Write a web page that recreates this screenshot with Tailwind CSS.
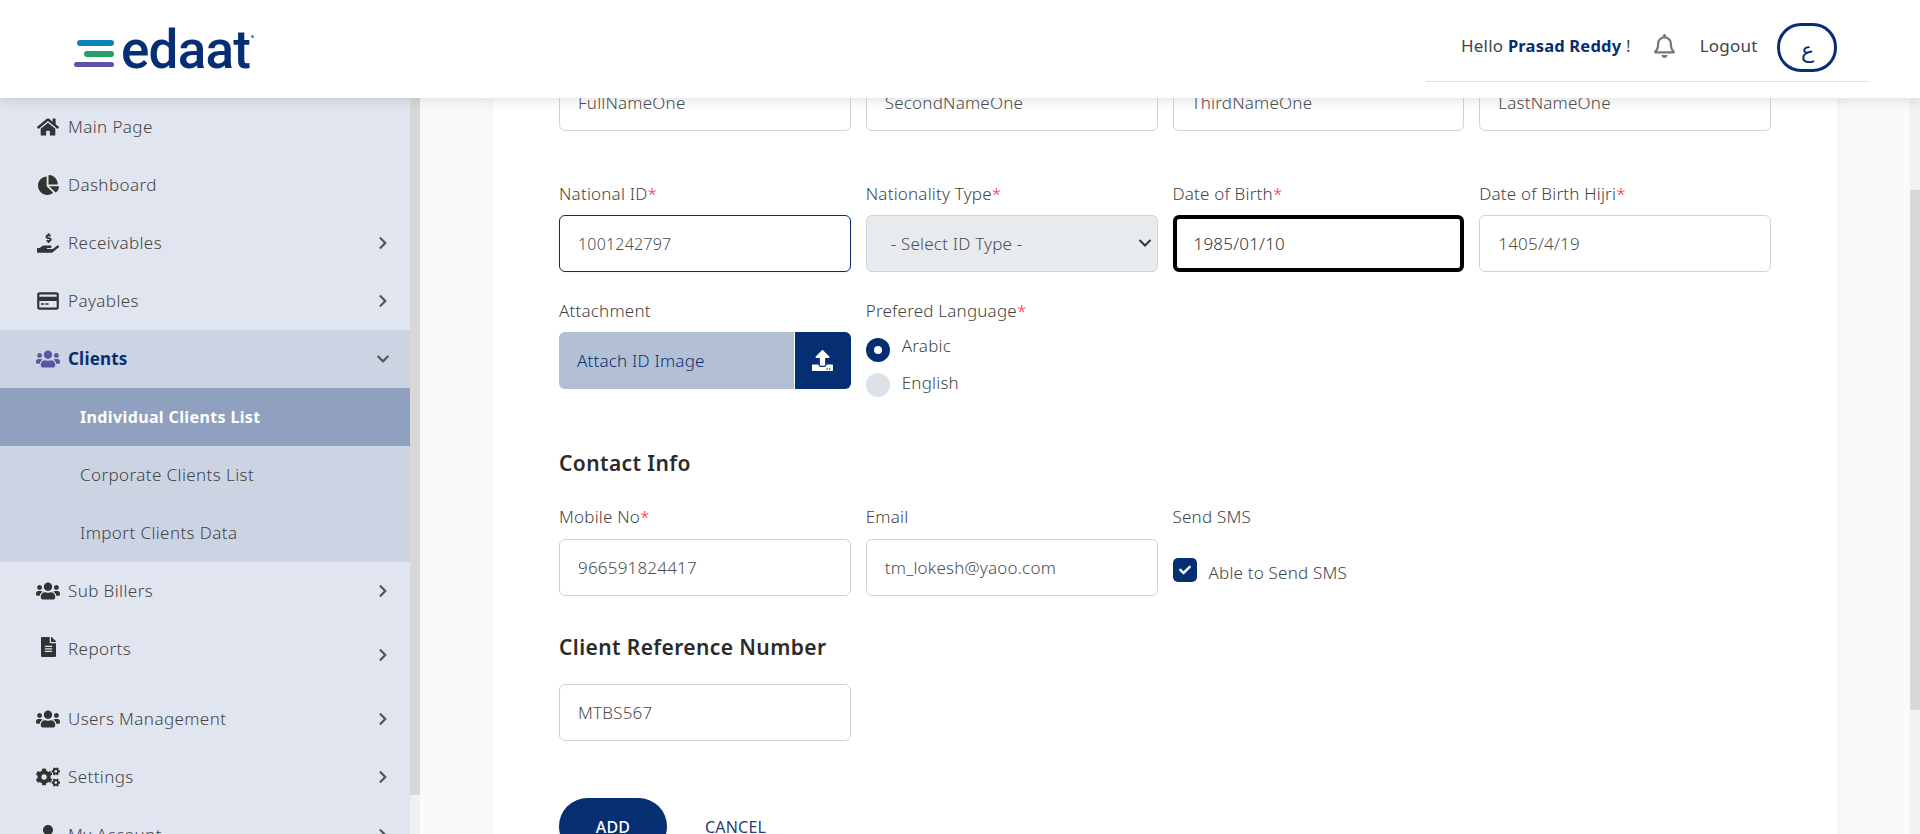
<!DOCTYPE html>
<html lang="en">
<head>
  <meta charset="UTF-8">
  <meta name="viewport" content="width=device-width, initial-scale=1.0">
  <title>edaat | Add Client</title>
  <script src="https://cdn.jsdelivr.net/npm/@tailwindcss/browser@4"></script>
</head>
<body class="font-['Noto_Sans',sans-serif] text-[#444] text-[17px] tracking-[0.2px]">

<svg class="hidden">
  <symbol id="chev" viewBox="0 0 320 512"><path d="M285.476 272.971L91.132 467.314c-9.373 9.373-24.569 9.373-33.941 0l-22.667-22.667c-9.357-9.357-9.375-24.522-.04-33.901L188.505 256 34.484 101.255c-9.335-9.379-9.317-24.544.04-33.901l22.667-22.667c9.373-9.373 24.569-9.373 33.941 0L285.475 239.03c9.373 9.372 9.373 24.568.001 33.941z"/></symbol>
  <symbol id="users" viewBox="0 0 640 512"><path d="M96 224c35.3 0 64-28.7 64-64s-28.7-64-64-64-64 28.7-64 64 28.7 64 64 64zm448 0c35.3 0 64-28.7 64-64s-28.7-64-64-64-64 28.7-64 64 28.7 64 64 64zm32 32h-64c-17.6 0-33.5 7.1-45.1 18.6 40.3 22.1 68.9 62 75.1 109.4h66c17.7 0 32-14.3 32-32v-32c0-35.3-28.7-64-64-64zm-256 0c61.9 0 112-50.1 112-112S381.9 32 320 32 208 82.1 208 144s50.1 112 112 112zm76.8 32h-8.3c-20.8 10-43.9 16-68.5 16s-47.6-6-68.5-16h-8.3C179.6 288 128 339.6 128 403.2V432c0 26.5 21.5 48 48 48h288c26.5 0 48-21.5 48-48v-28.8c0-63.6-51.6-115.2-115.2-115.2zm-223.7-13.4C161.5 263.1 145.6 256 128 256H64c-35.3 0-64 28.7-64 64v32c0 17.7 14.3 32 32 32h65.9c6.3-47.4 34.9-87.3 75.2-109.4z"/></symbol>
</svg>

<div class="h-screen overflow-hidden flex flex-col">

  <!-- Header -->
  <header class="relative z-10 h-[98px] shrink-0 bg-white shadow-[0_2px_12px_rgba(0,0,0,0.12)] flex items-start justify-between pl-[74px] pr-[51px]">
    <div class="flex items-center gap-[7px] h-[98px]">
      <div class="flex flex-col items-end gap-[5px] w-[40px] mt-[8px]">
        <span class="block w-[37px] h-[6px] rounded-full bg-[#0a82bd]"></span>
        <span class="block w-[30px] h-[6px] rounded-full bg-[#259e67]"></span>
        <span class="block w-[40px] h-[5px] rounded-full bg-[#5b55a3]"></span>
      </div>
      <div class="flex items-start mt-[1px]">
        <span class="font-['Roboto',sans-serif] font-medium text-[53px] leading-[60px] tracking-[-0.8px] text-[#062e72]">edaat</span>
        <span class="block w-[3px] h-[3px] mt-[15px] ml-[1px] rounded-full bg-[#5b7aa8]"></span>
      </div>
    </div>
    <div class="w-[443px] h-[82px] pt-[14px] pl-[35px] border-b border-[#dee2e6] flex items-center">
      <span class="pb-[3px]">Hello <b class="font-bold text-[16.5px] text-[#062e72]">Prasad Reddy</b> !</span>
      <svg class="w-[21px] h-[24px] ml-[23px] mb-[3px] fill-[#777]" viewBox="0 0 448 512"><path d="M439.39 362.29c-19.32-20.76-55.47-51.99-55.47-154.29 0-77.7-54.48-139.9-127.94-155.16V32c0-17.67-14.32-32-31.98-32s-31.98 14.33-31.98 32v20.84C118.56 68.1 64.08 130.3 64.08 208c0 102.3-36.15 133.53-55.47 154.29-6 6.45-8.66 14.16-8.61 21.71.11 16.4 12.98 32 32.1 32h383.8c19.12 0 32-15.6 32.1-32 .05-7.55-2.61-15.27-8.61-21.71zM67.53 368c21.22-27.97 44.42-74.33 44.53-159.42 0-.2-.06-.38-.06-.58 0-61.86 50.14-112 112-112s112 50.14 112 112c0 .2-.06.38-.06.58.11 85.1 23.31 131.46 44.53 159.42H67.53zM224 512c35.32 0 63.97-28.65 63.97-64H160.03c0 35.35 28.65 64 63.97 64z"/></svg>
      <span class="ml-[25px] pb-[3px]">Logout</span>
      <span class="ml-[20px] w-[60px] h-[49px] shrink-0 rounded-[24px] border-[3px] border-[#062e72] text-[#062e72] flex items-center justify-center font-['DejaVu_Sans',sans-serif] text-[22px] pt-[5px]">ع</span>
    </div>
  </header>

  <div class="flex-1 min-h-0 flex">

    <!-- Sidebar -->
    <nav class="w-[410px] shrink-0 bg-[#e1e5ef] overflow-hidden font-light tracking-[0.4px]">
      <a class="h-[58px] pl-[36px] pr-[20px] flex items-center">
        <span class="w-[24px] flex justify-center"><svg class="w-[22px] h-[20px] fill-[#333]" viewBox="0 0 576 512"><path d="M280.37 148.26L96 300.11V464a16 16 0 0 0 16 16l112.06-.29a16 16 0 0 0 15.92-16V368a16 16 0 0 1 16-16h64a16 16 0 0 1 16 16v95.64a16 16 0 0 0 16 16.05L464 480a16 16 0 0 0 16-16V300L295.67 148.26a12.19 12.19 0 0 0-15.3 0zM571.6 251.47L488 182.56V44.05a12 12 0 0 0-12-12h-56a12 12 0 0 0-12 12v72.61L318.47 43a48 48 0 0 0-61 0L4.34 251.47a12 12 0 0 0-1.6 16.9l25.5 31A12 12 0 0 0 45.15 301l235.22-193.74a12.19 12.19 0 0 1 15.3 0L530.9 301a12 12 0 0 0 16.9-1.6l25.5-31a12 12 0 0 0-1.7-16.93z"/></svg></span>
        <span class="ml-[8px]">Main Page</span>
      </a>
      <a class="h-[58px] pl-[36px] pr-[20px] flex items-center">
        <span class="w-[24px] flex justify-center"><svg class="w-[21px] h-[20px] fill-[#333]" viewBox="0 0 544 512"><path d="M527.79 288H290.5l158.03 158.03c6.04 6.04 15.98 6.53 22.19.68 38.7-36.46 65.32-85.61 73.13-140.86 1.34-9.46-6.51-17.85-16.06-17.85zm-15.83-64.8C503.72 103.74 408.26 8.28 288.8.04 279.68-.59 272 7.1 272 16.24V240h223.77c9.14 0 16.82-7.68 16.19-16.8zM224 288V50.71c0-9.55-8.39-17.4-17.84-16.06C86.99 51.49-4.1 155.6.14 280.37 4.5 408.51 114.83 513.59 243.03 511.98c50.4-.63 96.97-16.87 135.26-44.03 7.9-5.6 8.42-17.23 1.57-24.08L224 288z"/></svg></span>
        <span class="ml-[8px]">Dashboard</span>
      </a>
      <a class="h-[58px] pl-[36px] pr-[20px] flex items-center">
        <span class="w-[24px] flex justify-center"><svg class="w-[22px] h-[20px] fill-[#333]" viewBox="0 0 576 512"><path d="M271.06,144.3l54.27,14.3a8.59,8.59,0,0,1,6.63,8.1c0,4.6-4.09,8.4-9.12,8.4h-35.6a30,30,0,0,1-11.19-2.2c-5.24-2.2-11.28-1.7-15.3,2l-19,17.5a11.68,11.68,0,0,0-2.25,2.66,11.42,11.42,0,0,0,3.88,15.74,83.77,83.77,0,0,0,34.51,11.5V240c0,8.8,7.83,16,17.37,16h17.37c9.55,0,17.38-7.2,17.38-16V222.4c32.93-3.6,57.84-31,53.5-63-3.15-23-22.46-41.3-46.56-47.7L282.68,97.4a8.59,8.59,0,0,1-6.63-8.1c0-4.6,4.09-8.4,9.12-8.4h35.6A30,30,0,0,1,332,83.1c5.23,2.2,11.28,1.7,15.3-2l19-17.5A11.31,11.31,0,0,0,368.47,61a11.42,11.42,0,0,0-3.84-15.78,83.82,83.82,0,0,0-34.52-11.5V16c0-8.8-7.82-16-17.37-16H295.37C285.82,0,278,7.2,278,16V33.6c-32.89,3.6-57.85,31-53.51,63C227.63,119.6,247,137.9,271.06,144.3ZM565.27,328.1c-11.8-10.7-30.2-10-42.6,0L430.27,402a63.64,63.64,0,0,1-40,14H272a16,16,0,0,1,0-32h78.29c15.9,0,30.71-10.9,33.25-26.6a31.2,31.2,0,0,0,.46-5.46A32,32,0,0,0,352,320H192a117.66,117.66,0,0,0-74.1,26.29L71.4,384H16A16,16,0,0,0,0,400v96a16,16,0,0,0,16,16H372.77a64,64,0,0,0,40-14L564,377a32,32,0,0,0,1.28-48.9Z"/></svg></span>
        <span class="ml-[8px]">Receivables</span>
        <svg class="w-[14px] h-[14px] ml-auto fill-[#555]"><use href="#chev"/></svg>
      </a>
      <a class="h-[58px] pl-[36px] pr-[20px] flex items-center">
        <span class="w-[24px] flex justify-center"><svg class="w-[26px] h-[26px] shrink-0 fill-[#333]" viewBox="0 0 24 24"><path d="M20 4H4c-1.11 0-1.99.89-1.99 2L2 18c0 1.11.89 2 2 2h16c1.11 0 2-.89 2-2V6c0-1.11-.89-2-2-2zm0 14H4v-6h16v6zm0-10H4V6h16v2z"/><path d="M5.5 14h3v1.4h-3zM9.5 14h3v1.4h-3z"/></svg></span>
        <span class="ml-[8px]">Payables</span>
        <svg class="w-[14px] h-[14px] ml-auto fill-[#555]"><use href="#chev"/></svg>
      </a>

      <div class="bg-[#ccd3e3]">
        <a class="h-[58px] pl-[36px] pr-[20px] flex items-center">
          <span class="w-[24px] flex justify-center"><svg class="w-[24px] h-[20px] fill-[#5b55a3]"><use href="#users"/></svg></span>
          <span class="ml-[8px] font-bold tracking-[0.2px] text-[#062e72]">Clients</span>
          <svg class="w-[14px] h-[14px] ml-auto fill-[#555]" viewBox="0 0 448 512"><path d="M207.029 381.476L12.686 187.132c-9.373-9.373-9.373-24.569 0-33.941l22.667-22.667c9.357-9.357 24.522-9.375 33.901-.04L224 284.505l154.745-154.021c9.379-9.335 24.544-9.317 33.901.04l22.667 22.667c9.373 9.373 9.373 24.569 0 33.941L240.971 381.476c-9.373 9.372-24.569 9.372-33.942 0z"/></svg>
        </a>
        <a class="h-[58px] pl-[80px] flex items-center bg-[#8fa1bf] text-white font-bold text-base tracking-[0.37px]">Individual Clients List</a>
        <a class="h-[58px] pl-[80px] flex items-center">Corporate Clients List</a>
        <a class="h-[58px] pl-[80px] flex items-center">Import Clients Data</a>
      </div>

      <a class="h-[58px] pl-[36px] pr-[20px] flex items-center">
        <span class="w-[24px] flex justify-center"><svg class="w-[24px] h-[20px] fill-[#333]"><use href="#users"/></svg></span>
        <span class="ml-[8px]">Sub Billers</span>
        <svg class="w-[14px] h-[14px] ml-auto fill-[#555]"><use href="#chev"/></svg>
      </a>
      <a class="h-[70px] pl-[36px] pr-[20px] pt-[17px] flex items-start">
        <span class="w-[24px] flex justify-center"><svg class="w-[15px] h-[20px] fill-[#333]" viewBox="0 0 384 512"><path d="M224 136V0H24C10.7 0 0 10.7 0 24v464c0 13.3 10.7 24 24 24h336c13.3 0 24-10.7 24-24V160H248c-13.2 0-24-10.8-24-24zm64 236c0 6.6-5.4 12-12 12H108c-6.6 0-12-5.4-12-12v-8c0-6.6 5.4-12 12-12h168c6.6 0 12 5.4 12 12v8zm0-64c0 6.6-5.4 12-12 12H108c-6.6 0-12-5.4-12-12v-8c0-6.6 5.4-12 12-12h168c6.6 0 12 5.4 12 12v8zm0-72v8c0 6.6-5.4 12-12 12H108c-6.6 0-12-5.4-12-12v-8c0-6.6 5.4-12 12-12h168c6.6 0 12 5.4 12 12zm96-114.1v6.1H256V0h6.1c6.4 0 12.5 2.5 17 7l97.9 98c4.5 4.5 7 10.6 7 16.9z"/></svg></span>
        <span class="ml-[8px] leading-[24px]">Reports</span>
        <svg class="w-[14px] h-[14px] ml-auto mt-[11px] fill-[#555]"><use href="#chev"/></svg>
      </a>
      <a class="h-[58px] pl-[36px] pr-[20px] flex items-center">
        <span class="w-[24px] flex justify-center"><svg class="w-[24px] h-[20px] fill-[#333]"><use href="#users"/></svg></span>
        <span class="ml-[8px]">Users Management</span>
        <svg class="w-[14px] h-[14px] ml-auto fill-[#555]"><use href="#chev"/></svg>
      </a>
      <a class="h-[58px] pl-[36px] pr-[20px] flex items-center">
        <span class="w-[24px] flex justify-center"><svg class="w-[24px] h-[20px] fill-[#333]" viewBox="0 0 640 512"><path d="M512.1 191l-8.2 14.3c-3 5.3-9.4 7.5-15.1 5.4-11.8-4.4-22.6-10.7-32.1-18.6-4.6-3.8-5.8-10.5-2.8-15.7l8.2-14.3c-6.9-8-12.3-17.3-15.9-27.4h-16.5c-6 0-11.2-4.3-12.2-10.3-2-12-2.1-24.6 0-37.1 1-6 6.2-10.4 12.2-10.4h16.5c3.6-10.1 9-19.4 15.9-27.4l-8.2-14.3c-3-5.2-1.9-11.9 2.8-15.7 9.5-7.9 20.4-14.2 32.1-18.6 5.7-2.1 12.1.1 15.1 5.4l8.2 14.3c10.5-1.9 21.2-1.9 31.7 0L552 6.3c3-5.3 9.4-7.5 15.1-5.4 11.8 4.4 22.6 10.7 32.1 18.6 4.6 3.8 5.8 10.5 2.8 15.7l-8.2 14.3c6.9 8 12.3 17.3 15.9 27.4h16.5c6 0 11.2 4.3 12.2 10.3 2 12 2.1 24.6 0 37.1-1 6-6.2 10.4-12.2 10.4h-16.5c-3.6 10.1-9 19.4-15.9 27.4l8.2 14.3c3 5.2 1.9 11.9-2.8 15.7-9.5 7.9-20.4 14.2-32.1 18.6-5.7 2.1-12.1-.1-15.1-5.4l-8.2-14.3c-10.4 1.9-21.2 1.9-31.7 0zm-10.5-58.8c38.5 29.6 82.4-14.3 52.8-52.8-38.5-29.7-82.4 14.3-52.8 52.8zM386.3 286.1l33.7 16.8c10.1 5.8 14.5 18.1 10.5 29.1-8.9 24.2-26.4 46.4-42.6 65.8-7.4 8.9-20.2 11.1-30.3 5.3l-29.1-16.8c-16 13.7-34.6 24.6-54.9 31.7v33.6c0 11.6-8.3 21.6-19.7 23.6-24.6 4.2-50.4 4.4-75.9 0-11.5-2-20-11.9-20-23.6V418c-20.3-7.2-38.9-18-54.9-31.7L74 403c-10 5.8-22.9 3.6-30.3-5.3-16.2-19.4-33.3-41.6-42.2-65.7-4-10.9.4-23.2 10.5-29.1l33.3-16.8c-3.9-20.9-3.9-42.4 0-63.4L12 205.8c-10.1-5.8-14.6-18.1-10.5-29 8.9-24.2 26-46.4 42.2-65.8 7.4-8.9 20.2-11.1 30.3-5.3l29.1 16.8c16-13.7 34.6-24.6 54.9-31.7V57.1c0-11.5 8.2-21.5 19.6-23.5 24.6-4.2 50.5-4.4 76-.1 11.5 2 20 11.9 20 23.6v33.6c20.3 7.2 38.9 18 54.9 31.7l29.1-16.8c10-5.8 22.9-3.6 30.3 5.3 16.2 19.4 33.2 41.6 42.1 65.8 4 10.9.1 23.2-10 29.1l-33.7 16.8c3.9 21 3.9 42.5 0 63.5zm-117.6 21.1c59.2-77-28.7-164.9-105.7-105.7-59.2 77 28.7 164.9 105.7 105.7zm243.4 182.7l-8.2 14.3c-3 5.3-9.4 7.5-15.1 5.4-11.8-4.4-22.6-10.7-32.1-18.6-4.6-3.8-5.8-10.5-2.8-15.7l8.2-14.3c-6.9-8-12.3-17.3-15.9-27.4h-16.5c-6 0-11.2-4.3-12.2-10.3-2-12-2.1-24.6 0-37.1 1-6 6.2-10.4 12.2-10.4h16.5c3.6-10.1 9-19.4 15.9-27.4l-8.2-14.3c-3-5.2-1.9-11.9 2.8-15.7 9.5-7.9 20.4-14.2 32.1-18.6 5.7-2.1 12.1.1 15.1 5.4l8.2 14.3c10.5-1.9 21.2-1.9 31.7 0l8.2-14.3c3-5.3 9.4-7.5 15.1-5.4 11.8 4.4 22.6 10.7 32.1 18.6 4.6 3.8 5.8 10.5 2.8 15.7l-8.2 14.3c6.9 8 12.3 17.3 15.9 27.4h16.5c6 0 11.2 4.3 12.2 10.3 2 12 2.1 24.6 0 37.1-1 6-6.2 10.4-12.2 10.4h-16.5c-3.6 10.1-9 19.4-15.9 27.4l8.2 14.3c3 5.2 1.9 11.9-2.8 15.7-9.5 7.9-20.4 14.2-32.1 18.6-5.7 2.1-12.1-.1-15.1-5.4l-8.2-14.3c-10.4 1.9-21.2 1.9-31.7 0zM501.6 431c38.5 29.6 82.4-14.3 52.8-52.8-38.5-29.6-82.4 14.3-52.8 52.8z"/></svg></span>
        <span class="ml-[8px]">Settings</span>
        <svg class="w-[14px] h-[14px] ml-auto fill-[#555]"><use href="#chev"/></svg>
      </a>
      <a class="h-[58px] pl-[36px] pr-[20px] flex items-center">
        <span class="w-[24px] flex justify-center"><svg class="w-[18px] h-[20px] fill-[#333]" viewBox="0 0 448 512"><path d="M224 256c70.7 0 128-57.3 128-128S294.7 0 224 0 96 57.3 96 128s57.3 128 128 128zm89.6 32h-16.7c-22.2 10.2-46.9 16-72.9 16s-50.6-5.8-72.9-16h-16.7C60.2 288 0 348.2 0 422.4V464c0 26.5 21.5 48 48 48h352c26.5 0 48-21.5 48-48v-41.6c0-74.2-60.2-134.4-134.4-134.4z"/></svg></span>
        <span class="ml-[8px]">My Account</span>
        <svg class="w-[14px] h-[14px] ml-auto fill-[#555]"><use href="#chev"/></svg>
      </a>
    </nav>

    <!-- Sidebar scrollbar -->
    <div class="w-[10px] shrink-0 bg-[#f1f1f1]"><div class="h-[697px] bg-[#d8d8d8]"></div></div>

    <!-- Main -->
    <main class="flex-1 min-w-0 bg-[#f9fafc] pl-[73px] pr-[73px] overflow-hidden">
      <div class="bg-white h-[900px] pl-[66px] pr-[66px] font-light shadow-[0_0_16px_rgba(0,0,0,0.03)]">

        <div class="grid grid-cols-4 gap-x-[15px] -mt-[24px]">
          <input value="FullNameOne" class="min-w-0 h-[57px] px-[18px] border border-[#ced4da] rounded-md bg-white text-[#4d4d4d] outline-none">
          <input value="SecondNameOne" class="min-w-0 h-[57px] px-[18px] border border-[#ced4da] rounded-md bg-white text-[#4d4d4d] outline-none">
          <input value="ThirdNameOne" class="min-w-0 h-[57px] px-[18px] border border-[#ced4da] rounded-md bg-white text-[#4d4d4d] outline-none">
          <input value="LastNameOne" class="min-w-0 h-[57px] px-[18px] border border-[#ced4da] rounded-md bg-white text-[#4d4d4d] outline-none">
        </div>

        <div class="grid grid-cols-4 gap-x-[15px] mt-[51px]">
          <div>
            <label class="block h-[24px] leading-[23px] mb-[9px]">National ID<span class="text-red-500">*</span></label>
            <input value="1001242797" class="w-full h-[57px] px-[18px] border border-[#062e72] rounded-md bg-white text-[#4d4d4d] text-base outline-none shadow-[0_0_3px_rgba(120,220,150,0.25)]">
          </div>
          <div>
            <label class="block h-[24px] leading-[23px] mb-[9px]">Nationality Type<span class="text-red-500">*</span></label>
            <div class="relative">
              <select class="w-full h-[57px] pl-[24px] pr-[30px] border border-[#ced4da] rounded-md bg-[#e8ebee] text-[#4d4d4d] appearance-none outline-none">
                <option>- Select ID Type -</option>
              </select>
              <svg class="absolute right-[6px] top-[23px] w-[14px] h-[10px] fill-none stroke-[#333] stroke-2" viewBox="0 0 14 10"><path d="M1.5 2l5.5 5.5L12.5 2"/></svg>
            </div>
          </div>
          <div>
            <label class="block h-[24px] leading-[23px] mb-[9px]">Date of Birth<span class="text-red-500">*</span></label>
            <input value="1985/01/10" class="w-full h-[57px] px-[17px] border-4 border-black rounded-md bg-white text-[#333] outline-none">
          </div>
          <div>
            <label class="block h-[24px] leading-[23px] mb-[9px]">Date of Birth Hijri<span class="text-red-500">*</span></label>
            <input value="1405/4/19" class="w-full h-[57px] px-[18px] border border-[#ced4da] rounded-md bg-white text-[#4d4d4d] outline-none">
          </div>
        </div>

        <div class="grid grid-cols-4 gap-x-[15px] mt-[27px]">
          <div>
            <label class="block h-[24px] leading-[23px] mb-[9px]">Attachment</label>
            <div class="h-[57px] flex rounded-md overflow-hidden">
              <div class="flex-1 bg-[#b3c0d4] text-[#062e72] pl-[18px] flex items-center">Attach ID Image</div>
              <div class="w-[56px] ml-px bg-[#062e72] flex items-center justify-center">
                <svg class="w-[21px] h-[21px] fill-white" viewBox="0 0 512 512"><path d="M296 384h-80c-13.3 0-24-10.7-24-24V192h-87.7c-17.8 0-26.7-21.5-14.1-34.1L242.3 5.7c7.5-7.5 19.8-7.5 27.3 0l152.2 152.2c12.6 12.6 3.7 34.1-14.1 34.1H320v168c0 13.3-10.7 24-24 24zm216-8v112c0 13.3-10.7 24-24 24H24c-13.3 0-24-10.7-24-24V376c0-13.3 10.7-24 24-24h136v8c0 30.9 25.1 56 56 56h80c30.9 0 56-25.1 56-56v-8h136c13.3 0 24 10.7 24 24zm-124 88c0-11-9-20-20-20s-20 9-20 20 9 20 20 20 20-9 20-20zm64 0c0-11-9-20-20-20s-20 9-20 20 9 20 20 20 20-9 20-20z"/></svg>
              </div>
            </div>
          </div>
          <div>
            <label class="block h-[24px] leading-[23px] mb-[9px]">Prefered Language<span class="text-red-500">*</span></label>
            <div class="h-[57px] -mt-[1px]">
              <div class="flex gap-[12px] h-[36px]">
                <span class="w-[24px] h-[24px] mt-[7px] rounded-full bg-[#062e72] flex items-center justify-center"><span class="w-[8px] h-[8px] rounded-full bg-white"></span></span>
                <span class="leading-[24px] mt-[3px]">Arabic</span>
              </div>
              <div class="flex gap-[12px] h-[36px]">
                <span class="w-[24px] h-[24px] mt-[6px] rounded-full bg-[#dde1e8]"></span>
                <span class="leading-[24px] mt-[4px]">English</span>
              </div>
            </div>
          </div>
        </div>

        <h3 class="h-[28px] leading-[28px] mt-[60px] text-[21px] tracking-[0.4px] font-semibold text-[#2b2b2b]">Contact Info</h3>

        <div class="grid grid-cols-4 gap-x-[15px] mt-[28px]">
          <div>
            <label class="block h-[24px] leading-[23px] mb-[10px]">Mobile No<span class="text-red-500">*</span></label>
            <input value="966591824417" class="w-full h-[57px] px-[18px] border border-[#ced4da] rounded-md bg-white text-[#4d4d4d] outline-none">
          </div>
          <div>
            <label class="block h-[24px] leading-[23px] mb-[10px]">Email</label>
            <input value="tm_lokesh@yaoo.com" class="w-full h-[57px] px-[18px] border border-[#ced4da] rounded-md bg-white text-[#4d4d4d] outline-none">
          </div>
          <div>
            <label class="block h-[24px] leading-[23px]">Send SMS</label>
            <div class="flex gap-[12px] mt-[29px]">
              <span class="w-[24px] h-[24px] rounded-[5px] bg-[#062e72] flex items-center justify-center">
                <svg class="w-[12px] h-[12px] fill-white" viewBox="0 0 512 512"><path d="M173.898 439.404l-166.4-166.4c-9.997-9.997-9.997-26.206 0-36.204l36.203-36.204c9.997-9.998 26.207-9.998 36.204 0L192 312.69 432.095 72.596c9.997-9.997 26.207-9.997 36.204 0l36.203 36.204c9.997 9.997 9.997 26.206 0 36.204l-294.4 294.401c-9.998 9.997-26.207 9.997-36.204-.001z"/></svg>
              </span>
              <span class="leading-[24px] mt-[3px]">Able to Send SMS</span>
            </div>
          </div>
        </div>

        <h3 class="h-[28px] leading-[28px] mt-[37px] text-[21px] tracking-[0.4px] font-semibold text-[#2b2b2b]">Client Reference Number</h3>

        <div class="grid grid-cols-4 gap-x-[15px] mt-[23px]">
          <input value="MTBS567" class="min-w-0 h-[57px] px-[18px] border border-[#ced4da] rounded-md bg-white text-[#4d4d4d] outline-none">
        </div>

        <div class="flex items-start gap-[38px] mt-[57px]">
          <button class="w-[108px] h-[57px] rounded-full bg-[#062e72] text-white font-medium text-base shadow-md">ADD</button>
          <button class="h-[57px] text-[#1f3d7a] font-normal text-base">CANCEL</button>
        </div>
      </div>
    </main>

    <!-- Page scrollbar -->
    <div class="w-[10px] shrink-0 bg-[#f1f1f1] pt-[92px]"><div class="h-[520px] bg-[#d8d8d8]"></div></div>
  </div>
</div>

</body>
</html>
